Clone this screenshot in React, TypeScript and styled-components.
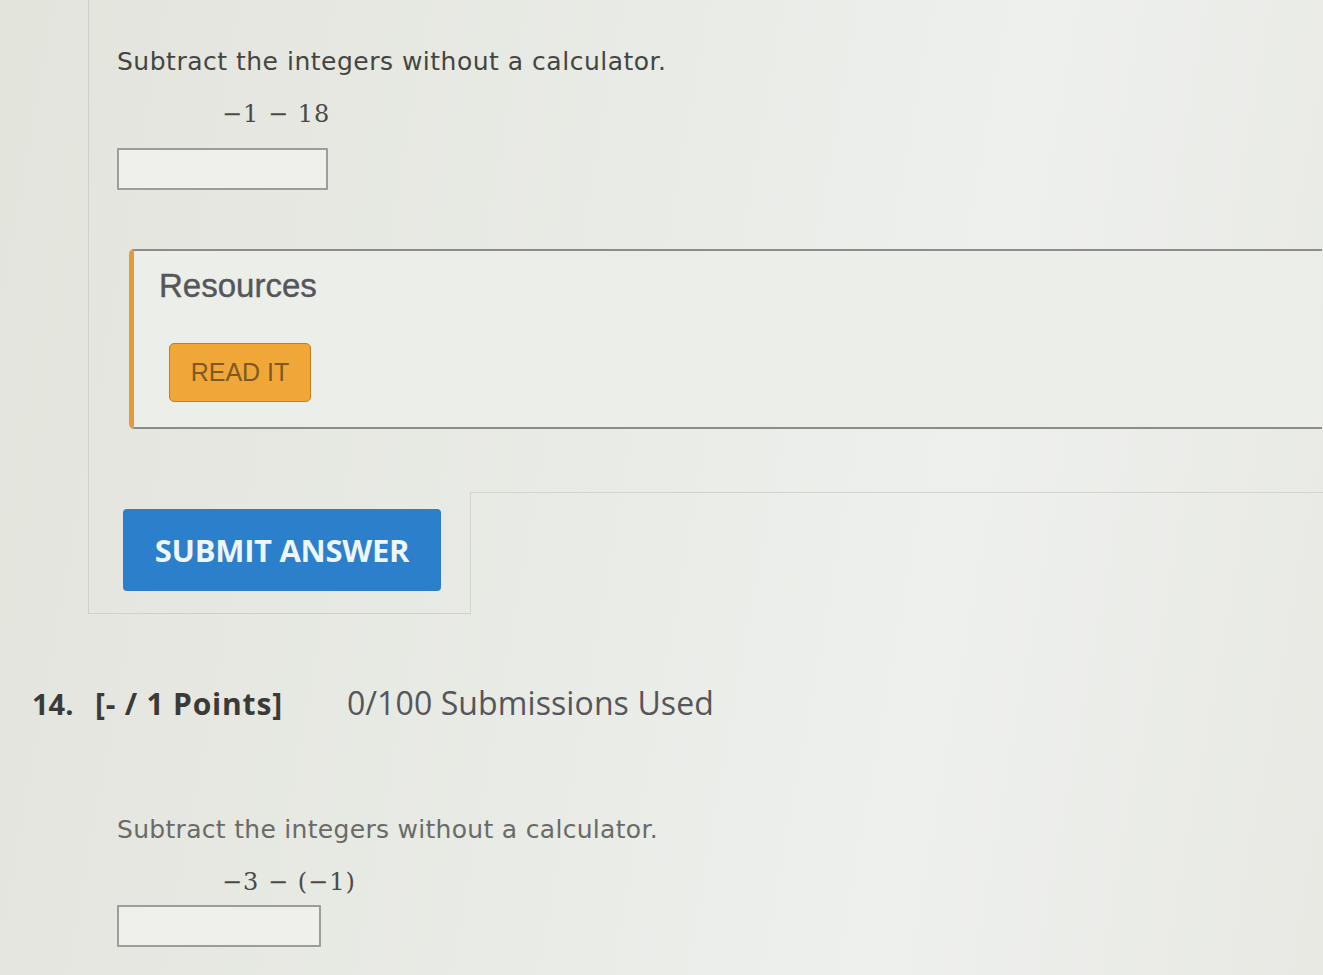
import React from "react";
import styled, { createGlobalStyle } from "styled-components";

const GlobalStyle = createGlobalStyle`
  html, body {
    margin: 0;
    padding: 0;
  }
  body {
    width: 1323px;
    height: 975px;
    overflow: hidden;
    background: linear-gradient(100deg, #e3e4dc 0%, #e9ebe6 45%, #eef0ee 70%, #e8e9e3 100%);
  }
`;

const Page = styled.div`
  display: flex;
  flex-direction: column;
`;

const CardRow = styled.div`
  display: flex;
  align-items: flex-end;
`;

const QuestionCard = styled.div`
  margin-left: 88px;
  width: 382px;
  border-left: 1px solid #cfd0ca;
  border-bottom: 1px solid #cfd0ca;
  padding: 47px 0 22px 28px;
  box-sizing: border-box;
`;

const WorkBox = styled.div`
  flex: 1;
  height: 122px;
  border-top: 1px solid #d3d4ce;
  border-left: 1px solid #d3d4ce;
  margin-bottom: -1px;
`;

const Prompt = styled.p<{ $muted?: boolean }>`
  margin: 0;
  white-space: nowrap;
  font-family: "DejaVu Sans", Verdana, sans-serif;
  font-size: 25px;
  letter-spacing: ${(p) => (p.$muted ? "0.3px" : "0.5px")};
  color: ${(p) => (p.$muted ? "#6a6b67" : "#444541")};
`;

const MathLine = styled.div`
  margin: 24px 0 0 105px;
  font-family: "DejaVu Serif", "Liberation Serif", serif;
  font-size: 24px;
  color: #4a4b47;
  white-space: nowrap;
  letter-spacing: 1px;
`;

const AnswerInput = styled.input<{ $w: number; $gap: number }>`
  display: block;
  margin-top: ${(p) => p.$gap}px;
  width: ${(p) => p.$w}px;
  height: 42px;
  box-sizing: border-box;
  border: 2px solid #9c9d98;
  border-radius: 1px;
  background: #eff0ec;
  outline: none;
`;

const Resources = styled.div`
  margin-top: 59px;
  margin-left: 12px;
  width: 1193px;
  height: 180px;
  box-sizing: border-box;
  border-left: 5px solid #e49a3c;
  border-top: 2px solid #8c8d89;
  border-bottom: 2px solid #8c8d89;
  border-radius: 5px 0 0 5px;
  background: #eceee9;
  padding: 16px 0 0 25px;
`;

const ResTitle = styled.h3`
  margin: 0;
  font-family: "Liberation Sans", Arial, sans-serif;
  font-weight: 400;
  font-size: 33px;
  color: #55565a;
  -webkit-text-stroke: 0.4px #55565a;
`;

const ReadButton = styled.button`
  margin: 38px 0 0 10px;
  width: 142px;
  height: 59px;
  background: #f1a737;
  border: 1.5px solid #b98124;
  border-radius: 5px;
  font-family: "Liberation Sans", Arial, sans-serif;
  font-size: 25px;
  color: #7c5a22;
  cursor: pointer;
`;

const SubmitButton = styled.button`
  margin: 80px 0 0 6px;
  width: 318px;
  height: 82px;
  background: #2c7fca;
  border: none;
  border-radius: 4px;
  font-family: "Open Sans", sans-serif;
  font-weight: 700;
  font-size: 31px;
  letter-spacing: -0.3px;
  color: #eef5fb;
  cursor: pointer;
`;

const ItemHeader = styled.div`
  display: flex;
  align-items: baseline;
  margin: 67px 0 0 32px;
  font-family: "Open Sans", sans-serif;
  white-space: nowrap;
`;

const ItemNum = styled.span`
  font-weight: 700;
  font-size: 29px;
  color: #3a3b38;
  width: 63px;
`;

const Points = styled.span`
  font-weight: 700;
  font-size: 30px;
  letter-spacing: 0.8px;
  color: #3a3b38;
  margin-right: 64px;
`;

const Submissions = styled.span`
  font-size: 32px;
  letter-spacing: 0.1px;
  color: #55565a;
`;

const NextQuestion = styled.div`
  margin: 91px 0 0 117px;
`;

export default function App() {
  return (
    <Page>
      <GlobalStyle />
      <CardRow>
        <QuestionCard>
          <Prompt>Subtract the integers without a calculator.</Prompt>
          <MathLine>−1 − 18</MathLine>
          <AnswerInput $w={211} $gap={20} />
          <Resources>
            <ResTitle>Resources</ResTitle>
            <ReadButton>READ IT</ReadButton>
          </Resources>
          <SubmitButton>SUBMIT ANSWER</SubmitButton>
        </QuestionCard>
        <WorkBox />
      </CardRow>
      <ItemHeader>
        <ItemNum>14.</ItemNum>
        <Points>[- / 1 Points]</Points>
        <Submissions>0/100 Submissions Used</Submissions>
      </ItemHeader>
      <NextQuestion>
        <Prompt $muted>Subtract the integers without a calculator.</Prompt>
        <MathLine>−3 − (−1)</MathLine>
        <AnswerInput $w={204} $gap={9} />
      </NextQuestion>
    </Page>
  );
}
